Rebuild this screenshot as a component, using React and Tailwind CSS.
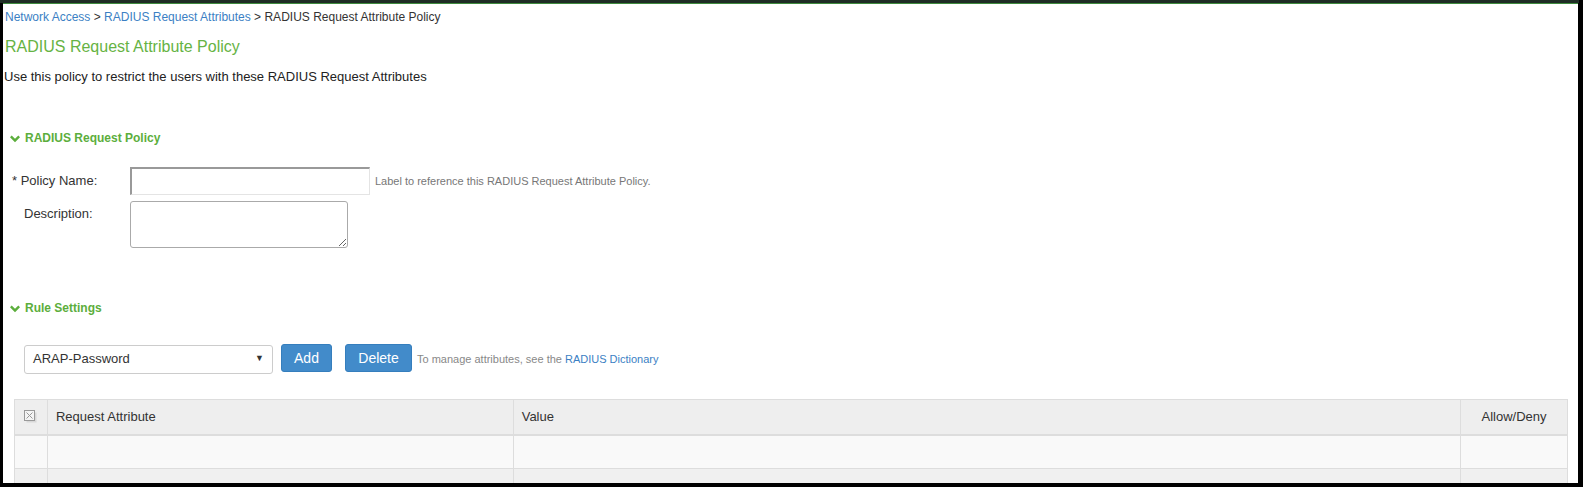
import React from 'react';

const Chevron = () => (
    <svg width="10" height="8" viewBox="0 0 10 8" fill="#5cae3c">
        <path d="M0 2.2 L1.7 0.5 L5 3.8 L8.3 0.5 L10 2.2 L5 7.2 Z" />
    </svg>
);

const SectionHeader = ({ title, className }) => (
    <div className={`flex items-center gap-[5px] pl-[7px] text-[12px] leading-[15px] font-bold text-[#5cae3c] ${className}`}>
        <Chevron />
        <span>{title}</span>
    </div>
);

const CheckIcon = () => (
    <svg width="13" height="13" viewBox="0 0 13 13">
        <rect x="2.5" y="2.5" width="10" height="10" fill="#d8d8d8" />
        <rect x="0.5" y="0.5" width="10" height="10" fill="#f4f4f4" stroke="#999" />
        <path d="M2.5 2.5 L8.5 8.5 M8.5 2.5 L2.5 8.5" stroke="#999" strokeWidth="1" />
    </svg>
);

const App = () => {
    return (
        <div className="w-[1583px] h-[487px] bg-black overflow-hidden flex flex-col font-['Liberation_Sans',Arial,sans-serif]">
            <div className="h-[3px] bg-[#1f2d25] mr-[4px]" />
            <div className="flex-1 ml-[3px] mr-[5px] mb-[4px] bg-white border-t border-[#3e8a3e] overflow-hidden">
                {/* breadcrumb */}
                <div className="pt-[5px] pl-[2px] text-[12px] leading-[17px] text-[#333]">
                    <span className="text-[#3b7fc4]">Network Access</span>
                    <span> &gt; </span>
                    <span className="text-[#3b7fc4]">RADIUS Request Attributes</span>
                    <span> &gt; RADIUS Request Attribute Policy</span>
                </div>
                <h1 className="mt-[11px] pl-[2px] text-[16px] leading-[20px] text-[#66b344]">
                    RADIUS Request Attribute Policy
                </h1>
                <p className="mt-[11px] pl-[1px] text-[13px] leading-[17px] text-[#222]">
                    Use this policy to restrict the users with these RADIUS Request Attributes
                </p>

                <SectionHeader title="RADIUS Request Policy" className="mt-[46px]" />

                <div className="mt-[21px] flex items-center">
                    <label className="w-[127px] pl-[9px] text-[13px] text-[#333]">* Policy Name:</label>
                    <input
                        type="text"
                        className="w-[240px] h-[28px] border border-[#e4e4e4] border-t-[#999] border-l-[#999] border-t-2 border-l-2 outline-none"
                    />
                    <span className="ml-[5px] text-[11px] text-[#777]">
                        Label to reference this RADIUS Request Attribute Policy.
                    </span>
                </div>
                <div className="mt-[6px] flex items-start">
                    <label className="w-[127px] pl-[21px] pt-[3px] text-[13px] text-[#333]">Description:</label>
                    <textarea className="w-[218px] h-[47px] border border-[#aaa] rounded-[3px] outline-none" />
                </div>

                <SectionHeader title="Rule Settings" className="mt-[53px]" />

                <div className="mt-[28px] pl-[21px] flex items-center">
                    <div className="w-[249px] h-[29px] border border-[#ccc] rounded-[3px] flex items-center justify-between px-[8px] text-[13px] text-[#333]">
                        <span>ARAP-Password</span>
                        <span className="text-[9px] text-[#333]">▼</span>
                    </div>
                    <button className="ml-[8px] w-[51px] h-[28px] mb-[2px] bg-[#428bca] border border-[#357ebd] rounded-[3px] text-white text-[14px]">
                        Add
                    </button>
                    <button className="ml-[13px] w-[67px] h-[28px] mb-[2px] bg-[#428bca] border border-[#357ebd] rounded-[3px] text-white text-[14px]">
                        Delete
                    </button>
                    <span className="ml-[5px] text-[11px] text-[#888]">
                        To manage attributes, see the <span className="text-[#3b7fc4]">RADIUS Dictionary</span>
                    </span>
                </div>

                <table className="mt-[25px] ml-[11px] w-[1554px] border-collapse text-[13px] text-[#333]">
                    <thead>
                        <tr className="h-[35px] bg-[#eeeeee]">
                            <th className="w-[33px] border border-[#ddd] border-b-2 font-normal">
                                <div className="flex justify-center"><CheckIcon /></div>
                            </th>
                            <th className="w-[466px] border border-[#ddd] border-b-2 font-normal text-left pl-[8px]">Request Attribute</th>
                            <th className="w-[948px] border border-[#ddd] border-b-2 font-normal text-left pl-[8px]">Value</th>
                            <th className="w-[107px] border border-[#ddd] border-b-2 font-normal text-center">Allow/Deny</th>
                        </tr>
                    </thead>
                    <tbody>
                        <tr className="h-[34px] bg-[#f9f9f9]">
                            <td className="border border-[#ddd]" />
                            <td className="border border-[#ddd]" />
                            <td className="border border-[#ddd]" />
                            <td className="border border-[#ddd]" />
                        </tr>
                        <tr className="h-[34px] bg-[#f0f0f0]">
                            <td className="border border-[#ddd]" />
                            <td className="border border-[#ddd]" />
                            <td className="border border-[#ddd]" />
                            <td className="border border-[#ddd]" />
                        </tr>
                    </tbody>
                </table>
            </div>
        </div>
    );
};

export default App;
